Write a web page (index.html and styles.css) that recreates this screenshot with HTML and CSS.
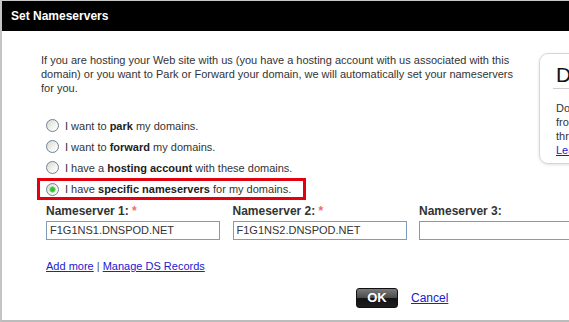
FILE: index.html
```html
<!DOCTYPE html>
<html lang="en">
<head>
    <meta charset="UTF-8">
    <meta name="viewport" content="width=device-width, initial-scale=1.0">
    <title>Set Nameservers</title>
    <link rel="stylesheet" href="styles.css">
</head>
<body>
    <div class="dialog">
        <div class="titlebar">Set Nameservers</div>

        <div class="dialog-body">
            <div class="top">
                <div class="main-col">
                    <p class="intro">
                        If you are hosting your Web site with us (you have a hosting account with us associated with this
                        domain) or you want to Park or Forward your domain, we will automatically set your nameservers
                        for you.
                    </p>

                    <div class="options">
                        <label class="option">
                            <input type="radio" name="nsType" value="park">
                            <span>I want to <b>park</b> my domains.</span>
                        </label>
                        <label class="option">
                            <input type="radio" name="nsType" value="forward">
                            <span>I want to <b>forward</b> my domains.</span>
                        </label>
                        <label class="option">
                            <input type="radio" name="nsType" value="hosting">
                            <span>I have a <b>hosting account</b> with these domains.</span>
                        </label>
                        <label class="option selected">
                            <input type="radio" name="nsType" value="custom" checked>
                            <span>I have <b>specific nameservers</b> for my domains.</span>
                        </label>
                    </div>
                </div>

                <div class="side-box">
                    <h2>DNS Help</h2>
                    <p>
                        Do you need help<br>
                        from our experts<br>
                        through live chat?<br>
                        <a href="#">Learn more</a>
                    </p>
                </div>
            </div>

            <div class="ns-grid">
                <div class="ns-field">
                    <label for="ns1">Nameserver 1: <span class="req">*</span></label>
                    <input type="text" id="ns1" value="F1G1NS1.DNSPOD.NET">
                </div>
                <div class="ns-field">
                    <label for="ns2">Nameserver 2: <span class="req">*</span></label>
                    <input type="text" id="ns2" value="F1G1NS2.DNSPOD.NET">
                </div>
                <div class="ns-field">
                    <label for="ns3">Nameserver 3:</label>
                    <input type="text" id="ns3" value="">
                </div>
            </div>

            <div class="links">
                <a href="#">Add more</a> | <a href="#">Manage DS Records</a>
            </div>

            <div class="actions">
                <button type="button" class="ok-btn">OK</button>
                <a href="#" class="cancel-link">Cancel</a>
            </div>
        </div>
    </div>
</body>
</html>
```

FILE: styles.css
```css
* {
    margin: 0;
    padding: 0;
    box-sizing: border-box;
}

body {
    font-family: Arial, 'Liberation Sans', sans-serif;
    background: white;
    color: #333;
}

.dialog {
    width: 569px;
    height: 322px;
    overflow: hidden;
    border-top: 1px solid #c8c8c8;
    border-left: 2px solid #c4c4c4;
    border-bottom: 2px solid #bcbcbc;
}

.titlebar {
    height: 30px;
    line-height: 30px;
    background: #000;
    color: white;
    font-size: 12px;
    font-weight: bold;
    padding-left: 9px;
}

.dialog-body {
    padding: 22px 0 0 39px;
}

.top {
    display: flex;
    align-items: flex-start;
    gap: 10px;
}

.main-col {
    width: 488px;
    flex-shrink: 0;
}

.intro {
    font-size: 11px;
    line-height: 14px;
    max-width: 480px;
}

.options {
    margin-top: 20px;
}

.option {
    display: flex;
    align-items: center;
    gap: 6px;
    height: 21px;
    font-size: 11px;
    padding-left: 5px;
}

.option b {
    color: #222;
}

.option.selected {
    width: 269px;
    height: 22px;
    margin-left: -4px;
    padding-left: 6px;
    border: 3px solid #e4000f;
}

input[type="radio"] {
    appearance: none;
    -webkit-appearance: none;
    width: 13px;
    height: 13px;
    border: 1px solid #6f8197;
    border-radius: 50%;
    background: linear-gradient(135deg, #d8d8d0 0%, #f4f4f0 60%, #fff 100%);
    flex-shrink: 0;
}

input[type="radio"]:checked {
    background: radial-gradient(circle, #2eb82e 0, #3fc43f 2px, #9adf9a 3px, transparent 3.5px),
                linear-gradient(135deg, #d8d8d0 0%, #f4f4f0 60%, #fff 100%);
}

.side-box {
    width: 200px;
    flex-shrink: 0;
    border: 1px solid #d6d6d6;
    border-radius: 9px;
    box-shadow: 0 1px 3px rgba(0,0,0,0.12);
    padding: 8px 0 6px 13px;
}

.side-box h2 {
    font-size: 21px;
    font-weight: normal;
    color: #111;
    line-height: 26px;
    padding-left: 3px;
    border-bottom: 1px solid #cfcfcf;
}

.side-box p {
    font-size: 11px;
    line-height: 14px;
    margin-top: 12px;
    padding-left: 3px;
}

.side-box a {
    color: #1a1acc;
}

.ns-grid {
    display: grid;
    grid-template-columns: 174px 174px 200px;
    column-gap: 12.5px;
    margin-top: 4px;
    padding-left: 5px;
}

.ns-field label {
    display: block;
    font-size: 12px;
    font-weight: bold;
    line-height: 14px;
    margin-bottom: 2px;
    color: #333;
}

.req {
    color: #f46a6a;
}

.ns-field input {
    width: 100%;
    height: 19px;
    border: 1px solid #7f9db9;
    padding: 0 3px;
    font-family: Arial, 'Liberation Sans', sans-serif;
    font-size: 11px;
    color: #333;
}

.links {
    margin-top: 19px;
    padding-left: 5px;
    font-size: 11px;
    line-height: 14px;
    color: #555;
}

.links a,
.cancel-link {
    color: #2020cc;
}

.actions {
    display: flex;
    align-items: center;
    gap: 13px;
    margin-top: 15px;
    padding-left: 315px;
}

.ok-btn {
    width: 42px;
    height: 20px;
    border: 1px solid #111;
    border-radius: 3px;
    background: linear-gradient(#7a7a7a 0%, #4a4a4a 50%, #121212 52%, #1e1e1e 100%);
    color: white;
    font-family: Arial, 'Liberation Sans', sans-serif;
    font-size: 13px;
    font-weight: bold;
    cursor: pointer;
}

.cancel-link {
    font-size: 12px;
}
```
